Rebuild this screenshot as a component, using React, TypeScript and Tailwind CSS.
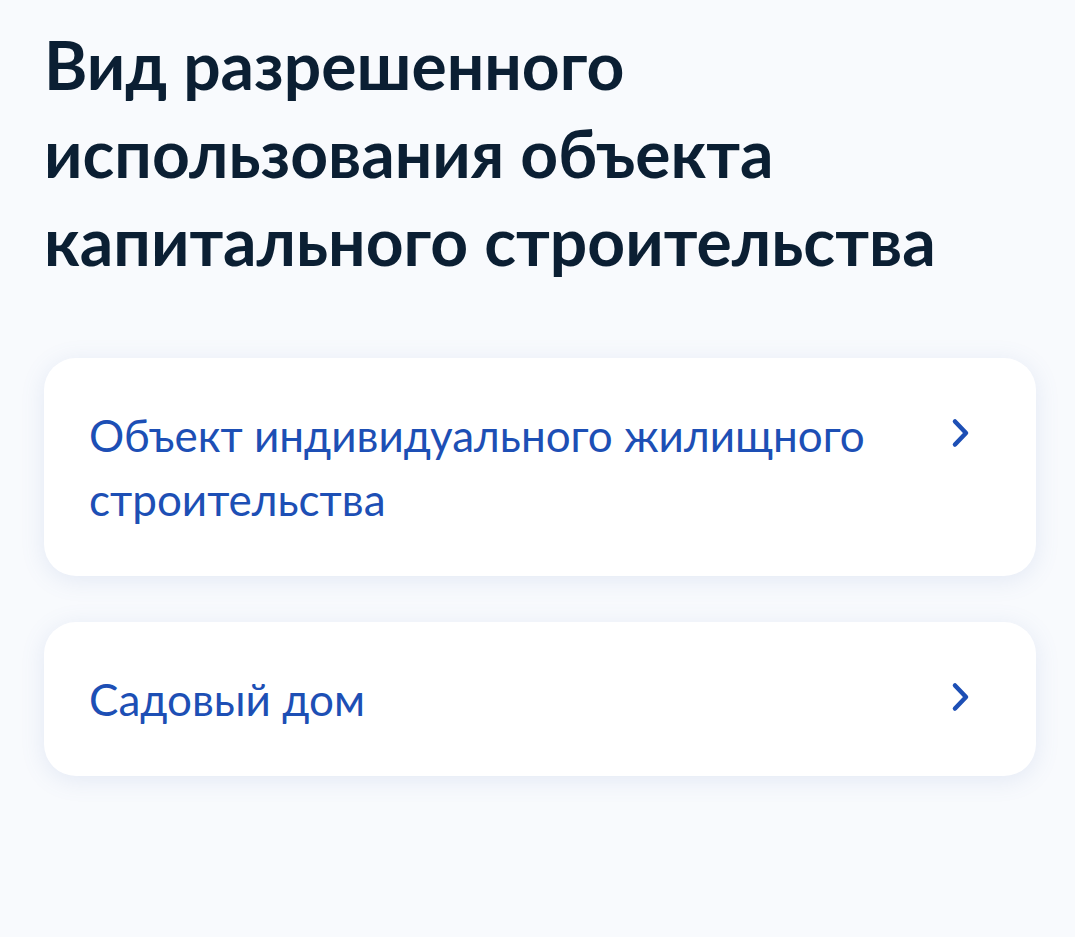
import React from 'react';

const items = [
  'Объект индивидуального жилищного строительства',
  'Садовый дом',
];

const Chevron: React.FC = () => (
  <svg width="48" height="64" viewBox="0 0 48 64" fill="none">
    <path d="M11 18.5 L22 30 L11 41.5" stroke="#1d4fb5" strokeWidth="4.5" strokeLinecap="round" strokeLinejoin="round" />
  </svg>
);

export default function App() {
  return (
    <div className="min-h-[937px] w-full bg-[#f8fafd] pl-[44px] pr-[39px] pt-[21px]" style={{ fontFamily: 'Lato, "Open Sans", sans-serif' }}>
      <h1 className="text-[66px] font-bold leading-[88px] text-[#0b1f33] pr-[80px]">
        Вид разрешенного использования объекта капитального строительства
      </h1>
      <div className="mt-[73px] flex flex-col gap-[46px]">
        {items.map((label) => (
          <button
            key={label}
            className="flex w-full items-start justify-between rounded-[32px] bg-white pl-[45px] pr-[44px] py-[45px] text-left shadow-[0_4px_24px_rgba(100,130,190,0.14)]"
          >
            <span className="max-w-[800px] text-[44px] leading-[64px] text-[#1d4fb5]">{label}</span>
            <Chevron />
          </button>
        ))}
      </div>
    </div>
  );
}
